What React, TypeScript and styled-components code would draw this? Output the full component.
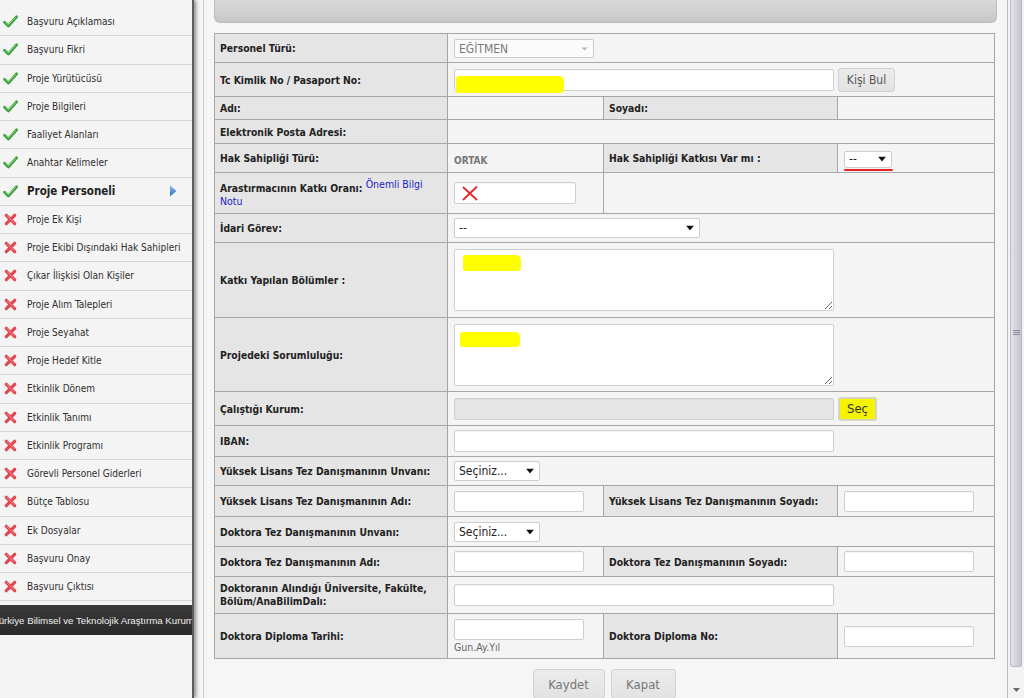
import React from "react";
import styled, { createGlobalStyle, css } from "styled-components";

const FONT = `"DejaVu Sans Condensed", "DejaVu Sans", sans-serif`;

const GlobalStyle = createGlobalStyle`
  html, body {
    margin: 0;
    padding: 0;
    overflow: hidden;
  }
  body {
    background: #f6f6f6;
    font-family: ${FONT};
  }
`;

type NavEntry = { label: string; done: boolean; active?: boolean };

const navItems: NavEntry[] = [
  { label: "Başvuru Açıklaması", done: true },
  { label: "Başvuru Fikri", done: true },
  { label: "Proje Yürütücüsü", done: true },
  { label: "Proje Bilgileri", done: true },
  { label: "Faaliyet Alanları", done: true },
  { label: "Anahtar Kelimeler", done: true },
  { label: "Proje Personeli", done: true, active: true },
  { label: "Proje Ek Kişi", done: false },
  { label: "Proje Ekibi Dışındaki Hak Sahipleri", done: false },
  { label: "Çıkar İlişkisi Olan Kişiler", done: false },
  { label: "Proje Alım Talepleri", done: false },
  { label: "Proje Seyahat", done: false },
  { label: "Proje Hedef Kitle", done: false },
  { label: "Etkinlik Dönem", done: false },
  { label: "Etkinlik Tanımı", done: false },
  { label: "Etkinlik Programı", done: false },
  { label: "Görevli Personel Giderleri", done: false },
  { label: "Bütçe Tablosu", done: false },
  { label: "Ek Dosyalar", done: false },
  { label: "Başvuru Onay", done: false },
  { label: "Başvuru Çıktısı", done: false },
];

function CheckIcon() {
  return (
    <svg width="15" height="13" viewBox="0 0 15 13">
      <path d="M1.6 7.2 L5.4 11 L13.6 1.8" fill="none" stroke="#3c9e3c" strokeWidth="2.8" strokeLinecap="round" strokeLinejoin="round" />
      <path d="M2.4 7.2 L5.4 10 L12.8 2" fill="none" stroke="#8ed67e" strokeWidth="1" strokeLinecap="round" strokeLinejoin="round" />
    </svg>
  );
}

function CrossIcon() {
  return (
    <svg width="13" height="13" viewBox="0 0 13 13">
      <path d="M2.3 2.3 L10.7 10.7 M10.7 2.3 L2.3 10.7" stroke="#e2474f" strokeWidth="3.2" strokeLinecap="round" />
      <path d="M3 2.6 L10 9.6" stroke="#f59aa0" strokeWidth="0.8" strokeLinecap="round" />
    </svg>
  );
}

function App() {
  return (
    <>
      <GlobalStyle />
      <Page>
        <Sidebar>
          <NavList>
            {navItems.map((item) => (
              <NavItem key={item.label} $active={item.active}>
                <NavIcon>{item.done ? <CheckIcon /> : <CrossIcon />}</NavIcon>
                <NavLabel>{item.label}</NavLabel>
                {item.active && (
                  <ActiveArrow width="8" height="12" viewBox="0 0 8 12">
                    <defs>
                      <linearGradient id="arr" x1="0" y1="0" x2="0" y2="1">
                        <stop offset="0" stopColor="#8bb8ea" />
                        <stop offset="1" stopColor="#2f6fc4" />
                      </linearGradient>
                    </defs>
                    <path d="M1 0.5 L7.5 6 L1 11.5 Z" fill="url(#arr)" />
                  </ActiveArrow>
                )}
              </NavItem>
            ))}
          </NavList>
          <SidebarFooter>
            <FooterText>Türkiye Bilimsel ve Teknolojik Araştırma Kurumu</FooterText>
          </SidebarFooter>
        </Sidebar>

        <Panel>
          <TopBar />
          <FormTable>
            <colgroup>
              <col style={{ width: 233 }} />
              <col style={{ width: 156 }} />
              <col style={{ width: 234 }} />
              <col style={{ width: 157 }} />
            </colgroup>
            <tbody>
              <Row $h={29}>
                <LabelCell>Personel Türü:</LabelCell>
                <ValueCell colSpan={3}>
                  <Select w={140} h={19} value="EĞİTMEN" muted />
                </ValueCell>
              </Row>
              <Row $h={34}>
                <LabelCell>Tc Kimlik No / Pasaport No:</LabelCell>
                <ValueCell colSpan={3}>
                  <Inline>
                    <Field>
                      <TextInput $w={380} $h={22} />
                      <Marker $x={2} $y={7} $w={108} $h={17} />
                    </Field>
                    <Button $w={57} $h={24}>Kişi Bul</Button>
                  </Inline>
                </ValueCell>
              </Row>
              <Row $h={23}>
                <LabelCell>Adı:</LabelCell>
                <ValueCell />
                <LabelCell>Soyadı:</LabelCell>
                <ValueCell />
              </Row>
              <Row $h={24}>
                <LabelCell>Elektronik Posta Adresi:</LabelCell>
                <ValueCell colSpan={3} />
              </Row>
              <Row $h={29}>
                <LabelCell>Hak Sahipliği Türü:</LabelCell>
                <ValueCell>
                  <StaticValue>ORTAK</StaticValue>
                </ValueCell>
                <LabelCell>Hak Sahipliği Katkısı Var mı :</LabelCell>
                <ValueCell>
                  <Select w={48} h={17} value="--" underline />
                </ValueCell>
              </Row>
              <Row $h={41}>
                <LabelCell $bottom>
                  <TightLines>
                    Arastırmacının Katkı Oranı:{" "}
                    <InfoLink href="#">
                      Önemli Bilgi
                      <br />
                      Notu
                    </InfoLink>
                  </TightLines>
                </LabelCell>
                <ValueCell>
                  <Field>
                    <TextInput $w={122} $h={22} />
                    <RedCross width="16" height="15" viewBox="0 0 16 15">
                      <path d="M1.5 1.5 L14.5 13.5 M14.5 1 L1.5 13.5" stroke="#e3262b" strokeWidth="1.8" strokeLinecap="round" />
                    </RedCross>
                  </Field>
                </ValueCell>
                <ValueCell colSpan={2} />
              </Row>
              <Row $h={29}>
                <LabelCell>İdari Görev:</LabelCell>
                <ValueCell colSpan={3}>
                  <Select w={246} h={20} value="--" />
                </ValueCell>
              </Row>
              <Row $h={75}>
                <LabelCell>Katkı Yapılan Bölümler :</LabelCell>
                <ValueCell colSpan={3}>
                  <Field>
                    <TextArea $w={380} $h={62} />
                    <Marker $x={9} $y={6} $w={58} $h={16} />
                  </Field>
                </ValueCell>
              </Row>
              <Row $h={74}>
                <LabelCell>Projedeki Sorumluluğu:</LabelCell>
                <ValueCell colSpan={3}>
                  <Field>
                    <TextArea $w={380} $h={62} />
                    <Marker $x={6} $y={8} $w={60} $h={15} />
                  </Field>
                </ValueCell>
              </Row>
              <Row $h={34}>
                <LabelCell>Çalıştığı Kurum:</LabelCell>
                <ValueCell colSpan={3}>
                  <Inline>
                    <TextInput $w={380} $h={22} disabled $disabledLook />
                    <Button $w={39} $h={24} $highlight>Seç</Button>
                  </Inline>
                </ValueCell>
              </Row>
              <Row $h={31}>
                <LabelCell>IBAN:</LabelCell>
                <ValueCell colSpan={3}>
                  <TextInput $w={380} $h={22} />
                </ValueCell>
              </Row>
              <Row $h={29}>
                <LabelCell>Yüksek Lisans Tez Danışmanının Unvanı:</LabelCell>
                <ValueCell colSpan={3}>
                  <Select w={86} h={20} value="Seçiniz..." />
                </ValueCell>
              </Row>
              <Row $h={31}>
                <LabelCell>Yüksek Lisans Tez Danışmanının Adı:</LabelCell>
                <ValueCell>
                  <TextInput $w={130} $h={21} />
                </ValueCell>
                <LabelCell>Yüksek Lisans Tez Danışmanının Soyadı:</LabelCell>
                <ValueCell>
                  <TextInput $w={130} $h={21} />
                </ValueCell>
              </Row>
              <Row $h={30}>
                <LabelCell>Doktora Tez Danışmanının Unvanı:</LabelCell>
                <ValueCell colSpan={3}>
                  <Select w={86} h={20} value="Seçiniz..." />
                </ValueCell>
              </Row>
              <Row $h={30}>
                <LabelCell>Doktora Tez Danışmanının Adı:</LabelCell>
                <ValueCell>
                  <TextInput $w={130} $h={21} />
                </ValueCell>
                <LabelCell>Doktora Tez Danışmanının Soyadı:</LabelCell>
                <ValueCell>
                  <TextInput $w={130} $h={21} />
                </ValueCell>
              </Row>
              <Row $h={37}>
                <LabelCell>
                  <TightLines>
                    Doktoranın Alındığı Üniversite, Fakülte,
                    <br />
                    Bölüm/AnaBilimDalı:
                  </TightLines>
                </LabelCell>
                <ValueCell colSpan={3}>
                  <TextInput $w={380} $h={22} />
                </ValueCell>
              </Row>
              <Row $h={45}>
                <LabelCell>Doktora Diploma Tarihi:</LabelCell>
                <ValueCell>
                  <Stack>
                    <TextInput $w={130} $h={21} />
                    <Hint>Gun.Ay.Yıl</Hint>
                  </Stack>
                </ValueCell>
                <LabelCell>Doktora Diploma No:</LabelCell>
                <ValueCell>
                  <TextInput $w={130} $h={21} />
                </ValueCell>
              </Row>
            </tbody>
          </FormTable>
          <Actions>
            <Button $w={72} $h={30} $big>Kaydet</Button>
            <Button $w={65} $h={30} $big>Kapat</Button>
          </Actions>
        </Panel>

        <Scrollbar>
          <Thumb>
            <svg width="7" height="6" viewBox="0 0 7 6">
              <path d="M0 0.5 H7 M0 2.5 H7 M0 4.5 H7" stroke="#8a8a96" strokeWidth="1" />
            </svg>
          </Thumb>
          <ScrollArrow width="7" height="4" viewBox="0 0 7 4">
            <path d="M0 0 L7 0 L3.5 4 Z" fill="#6a6a6a" />
          </ScrollArrow>
        </Scrollbar>
      </Page>
    </>
  );
}

type SelectProps = { w: number; h: number; value: string; muted?: boolean; underline?: boolean };

function Select({ w, h, value, muted, underline }: SelectProps) {
  return (
    <SelectWrap $w={w} $h={h} $underline={underline}>
      <NativeSelect $muted={muted} defaultValue={value}>
        <option value={value}>{value}</option>
      </NativeSelect>
      {muted ? (
        <Caret width="7" height="4" viewBox="0 0 7 4">
          <path d="M0.5 0.5 L6.5 0.5 L3.5 3.5 Z" fill="#b5b5b5" />
        </Caret>
      ) : (
        <Caret width="8" height="5" viewBox="0 0 8 5">
          <path d="M0 0 L8 0 L4 5 Z" fill="#111" />
        </Caret>
      )}
    </SelectWrap>
  );
}

export default App;

const Page = styled.div`
  display: flex;
  width: 1024px;
  height: 698px;
  overflow: hidden;
  background: #f6f6f6;
`;

const Sidebar = styled.div`
  position: relative;
  z-index: 1;
  width: 194px;
  flex-shrink: 0;
  margin-right: 9px;
  display: flex;
  flex-direction: column;
  padding-top: 8px;
  box-sizing: border-box;
  background: #f4f4f4;
  border-right: 2px solid #5e5e5e;
  box-shadow: 2px 0 4px rgba(0, 0, 0, 0.45);
`;

const NavList = styled.ul`
  list-style: none;
  margin: 0;
  padding: 0;
`;

const NavItem = styled.li<{ $active?: boolean }>`
  display: flex;
  align-items: center;
  height: 27.25px;
  padding-left: 3px;
  border-bottom: 1px solid #d5d5d5;
  font-family: ${FONT};
  font-size: 10px;
  color: #2e2e2e;
  white-space: nowrap;
  ${(p) =>
    p.$active &&
    css`
      font-size: 11.5px;
      font-weight: bold;
      color: #222;
    `}
`;

const NavIcon = styled.span`
  display: flex;
  align-items: center;
  justify-content: center;
  width: 15px;
  margin-right: 9px;
`;

const NavLabel = styled.span`
  flex: 1;
`;

const ActiveArrow = styled.svg`
  margin-right: 15px;
`;

const SidebarFooter = styled.div`
  margin-top: 4px;
  height: 30px;
  display: flex;
  align-items: center;
  justify-content: center;
  overflow: hidden;
  background: linear-gradient(#3a3a3a, #2a2a2a);
`;

const FooterText = styled.span`
  flex-shrink: 0;
  white-space: nowrap;
  font-family: "Liberation Sans", Arial, sans-serif;
  font-size: 9.7px;
  color: #eee;
`;

const Panel = styled.div`
  flex: 1;
  display: flex;
  flex-direction: column;
  padding: 0 11px 0 10px;
  border-left: 1px solid #cacaca;
  background: #f6f6f6;
`;

const TopBar = styled.div`
  flex-shrink: 0;
  height: 23px;
  margin-right: -1px;
  margin-bottom: 10px;
  box-sizing: border-box;
  border: 1px solid #bcbcbc;
  border-top: none;
  border-radius: 0 0 6px 6px;
  background: linear-gradient(#d9d9d9, #cdcdcd 70%, #c6c6c6);
`;

const FormTable = styled.table`
  flex-shrink: 0;
  width: 780px;
  table-layout: fixed;
  border-collapse: collapse;
`;

const Row = styled.tr<{ $h: number }>`
  height: ${(p) => p.$h}px;
`;

const LabelCell = styled.td<{ $bottom?: boolean }>`
  padding: 0 4px 0 5px;
  border: 1px solid #a7a7a7;
  background: #e5e5e5;
  font-family: ${FONT};
  font-size: 10.3px;
  font-weight: bold;
  color: #222;
  vertical-align: middle;
  white-space: nowrap;
  ${(p) =>
    p.$bottom &&
    css`
      vertical-align: bottom;
      padding-bottom: 1px;
    `}
`;

const ValueCell = styled.td`
  padding: 0 5px 0 6px;
  border: 1px solid #a7a7a7;
  background: #f4f4f4;
  vertical-align: middle;
  font-family: ${FONT};
`;

const TightLines = styled.div`
  line-height: 13px;
`;

const InfoLink = styled.a`
  color: #1c1cc8;
  font-weight: normal;
  font-size: 10.5px;
  text-decoration: none;
  vertical-align: 4px;
`;

const StaticValue = styled.span`
  font-size: 10px;
  font-weight: bold;
  color: #777;
`;

const Inline = styled.div`
  display: flex;
  align-items: center;
  gap: 4px;
`;

const Field = styled.span`
  position: relative;
  display: inline-block;
  vertical-align: middle;
  line-height: 0;
`;

const Marker = styled.span<{ $x: number; $y: number; $w: number; $h: number }>`
  position: absolute;
  left: ${(p) => p.$x}px;
  top: ${(p) => p.$y}px;
  width: ${(p) => p.$w}px;
  height: ${(p) => p.$h}px;
  background: #ffff00;
  border-radius: 3px 5px 4px 2px;
  pointer-events: none;
`;

const RedCross = styled.svg`
  position: absolute;
  left: 8px;
  top: 4px;
  pointer-events: none;
`;

const TextInput = styled.input<{ $w: number; $h: number; $disabledLook?: boolean }>`
  display: block;
  width: ${(p) => p.$w}px;
  height: ${(p) => p.$h}px;
  box-sizing: border-box;
  margin: 0;
  padding: 0 4px;
  border: 1px solid #cfcfcf;
  border-radius: 2px;
  background: ${(p) => (p.$disabledLook ? "#e5e5e5" : "#fff")};
  box-shadow: inset 0 1px 1px rgba(0, 0, 0, 0.04);
  font-family: ${FONT};
  font-size: 12px;
  outline: none;
`;

const TextArea = styled.textarea<{ $w: number; $h: number }>`
  display: block;
  width: ${(p) => p.$w}px;
  height: ${(p) => p.$h}px;
  box-sizing: border-box;
  margin: 0;
  padding: 3px;
  border: 1px solid #cfcfcf;
  border-radius: 2px;
  background: #fff;
  font-family: ${FONT};
  font-size: 12px;
  outline: none;
`;

const SelectWrap = styled.div<{ $w: number; $h: number; $underline?: boolean }>`
  position: relative;
  display: inline-block;
  vertical-align: middle;
  width: ${(p) => p.$w}px;
  height: ${(p) => p.$h}px;
  ${(p) =>
    p.$underline &&
    css`
      &::after {
        content: "";
        position: absolute;
        left: 0;
        right: -1px;
        bottom: -3px;
        height: 1.5px;
        border-radius: 1px;
        background: #e02424;
      }
    `}
`;

const NativeSelect = styled.select<{ $muted?: boolean }>`
  appearance: none;
  display: block;
  width: 100%;
  height: 100%;
  box-sizing: border-box;
  margin: 0;
  padding: 0 14px 0 4px;
  border: 1px solid #cdcdcd;
  border-radius: 2px;
  background: ${(p) => (p.$muted ? "#fbfbfb" : "#fff")};
  font-family: ${FONT};
  font-size: 12px;
  color: ${(p) => (p.$muted ? "#7a7a7a" : "#222")};
  outline: none;
`;

const Caret = styled.svg`
  position: absolute;
  right: 6px;
  top: 50%;
  transform: translateY(-50%);
  pointer-events: none;
`;

const Button = styled.button<{ $w: number; $h: number; $highlight?: boolean; $big?: boolean }>`
  flex-shrink: 0;
  width: ${(p) => p.$w}px;
  height: ${(p) => p.$h}px;
  margin: 0;
  padding: 0;
  box-sizing: border-box;
  border: 1px solid #d2d2d2;
  border-radius: 3px;
  background: linear-gradient(#ececec, #e2e2e2);
  font-family: ${FONT};
  font-size: ${(p) => (p.$big ? 13 : 12)}px;
  color: ${(p) => (p.$big ? "#777" : "#555")};
  cursor: pointer;
  ${(p) =>
    p.$highlight &&
    css`
      border: 2px solid #d4d4c0;
      background: #f4f400;
      color: #333;
      font-size: 13px;
    `}
`;

const Stack = styled.div`
  display: flex;
  flex-direction: column;
  align-items: flex-start;
`;

const Hint = styled.span`
  margin-top: 1px;
  font-size: 10.5px;
  line-height: 13px;
  color: #666;
`;

const Actions = styled.div`
  flex-shrink: 0;
  display: flex;
  justify-content: center;
  gap: 6px;
  width: 780px;
  margin-top: 10px;
`;

const Scrollbar = styled.div`
  width: 17px;
  flex-shrink: 0;
  box-sizing: border-box;
  display: flex;
  flex-direction: column;
  align-items: center;
  border-left: 1px solid #bdbdbd;
  background: #f3f3f3;
`;

const Thumb = styled.div`
  width: 12px;
  height: 667px;
  box-sizing: border-box;
  display: flex;
  align-items: center;
  justify-content: center;
  border: 1px solid #b9b9c2;
  border-top: none;
  border-radius: 0 0 3px 3px;
  background: linear-gradient(to right, #e4e4ea, #d2d2da 50%, #c4c4cc);
`;

const ScrollArrow = styled.svg`
  margin-top: 21px;
`;
